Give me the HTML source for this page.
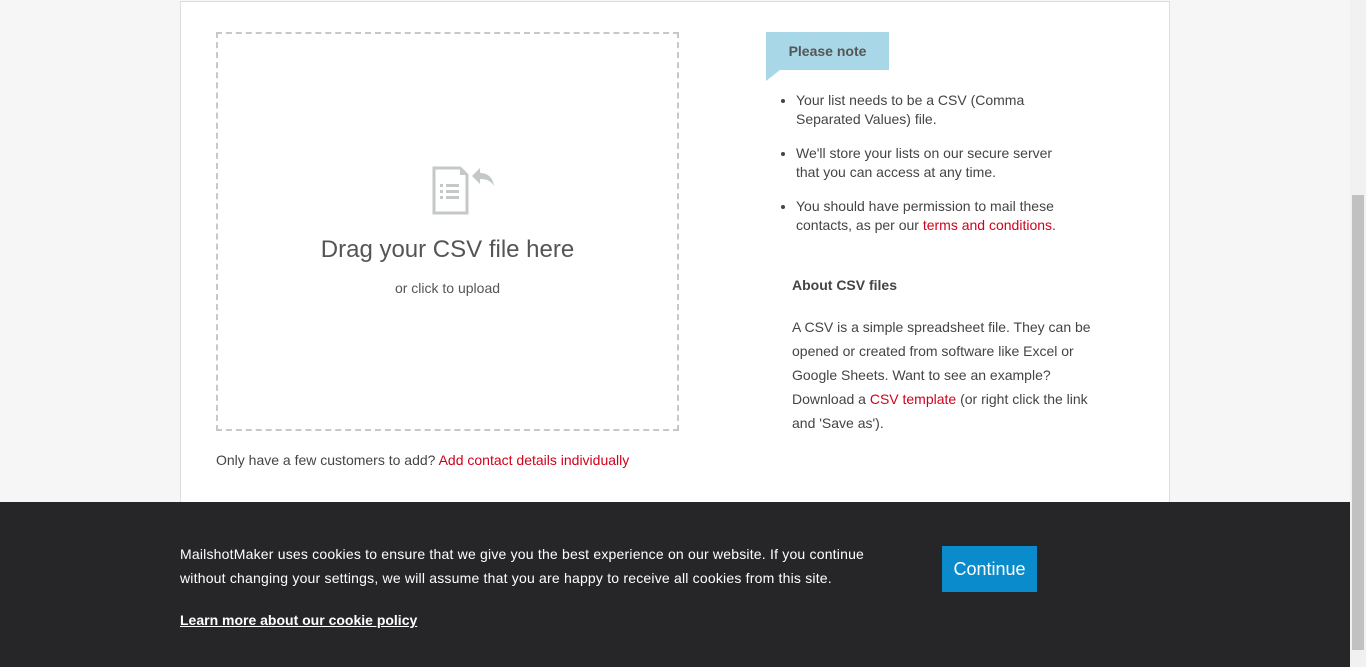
<!DOCTYPE html><html><head><style>
body{margin:0;width:1366px;height:667px;overflow:hidden;background:#f6f6f6;font-family:"Liberation Sans",sans-serif;position:relative;color:#444}
.box{position:absolute;left:180px;top:1px;width:988px;height:520px;background:#fff;border:1px solid #ddd}
.drop{position:absolute;left:216px;top:32px;width:459px;height:395px;border:2px dashed #c8c8c8}
a{color:#d0021b;text-decoration:none}
.note{position:absolute;left:766px;top:32px;width:123px;height:38px;background:#a8d8e8;color:#555;font-weight:bold;font-size:14px;line-height:38px;text-align:center}
ul{position:absolute;left:776px;top:91px;margin:0;padding:0 0 0 20px;width:278px;font-size:14px;line-height:19px;color:#444}
li{margin-bottom:15px}
.about{position:absolute;left:792px;top:273px;width:320px;font-size:14px;line-height:24px;color:#444}
.cookie{position:absolute;left:0;top:502px;width:1350px;height:165px;background:#262629;color:#fff;font-size:14px}
.sb{position:absolute;right:0;top:0;width:16px;height:667px;background:#f1f1f1}
.sb div{position:absolute;left:2px;right:2px;top:195px;height:455px;background:#c1c1c1}
</style></head><body>
<div class="box"></div>
<div class="drop">
<svg style="position:absolute;left:214px;top:132px" width="66" height="50" viewBox="0 0 66 50"><path d="M2 2H28L35 9V47H2Z" fill="none" stroke="#c4c8c8" stroke-width="3"/><path d="M28 2V9H35" fill="#c4c8c8"/><rect x="8" y="18" width="3" height="3" fill="#c4c8c8"/><rect x="8" y="24" width="3" height="3" fill="#c4c8c8"/><rect x="8" y="30" width="3" height="3" fill="#c4c8c8"/><rect x="14" y="18" width="13" height="3" fill="#c4c8c8"/><rect x="14" y="24" width="13" height="3" fill="#c4c8c8"/><rect x="14" y="30" width="13" height="3" fill="#c4c8c8"/><path d="M40 10L48 2V7C56 7 61 12 62 20C59 15 55 13 48 13V18Z" fill="#c4c8c8"/></svg>
<div style="position:absolute;top:202px;width:100%;text-align:center;font-size:24px;color:#555">Drag your CSV file here</div>
<div style="position:absolute;top:246px;width:100%;text-align:center;font-size:14px;color:#555">or click to upload</div>
</div>
<div style="position:absolute;left:216px;top:452px;font-size:14px;color:#444">Only have a few customers to add? <a>Add contact details individually</a></div>
<div class="note">Please note</div>
<svg style="position:absolute;left:766px;top:70px" width="14" height="11"><path d="M0 0H14L0 11Z" fill="#a8d8e8"/></svg>
<ul><li>Your list needs to be a CSV (Comma Separated Values) file.</li><li>We'll store your lists on our secure server that you can access at any time.</li><li>You should have permission to mail these contacts, as per our <a>terms and conditions</a>.</li></ul>
<div class="about"><b>About CSV files</b><div style="margin-top:18px">A CSV is a simple spreadsheet file. They can be opened or created from software like Excel or Google Sheets. Want to see an example? Download a <a>CSV template</a> (or right click the link and 'Save as').</div></div>
<div class="cookie">
<div style="position:absolute;left:180px;top:40px;width:720px;line-height:24px;letter-spacing:0.2px">MailshotMaker uses cookies to ensure that we give you the best experience on our website. If you continue<br>without changing your settings, we will assume that you are happy to receive all cookies from this site.</div>
<div style="position:absolute;left:180px;top:110px;text-decoration:underline;font-weight:bold">Learn more about our cookie policy</div>
<div style="position:absolute;left:942px;top:44px;width:95px;height:46px;background:#0a8ccc;font-size:18px;line-height:46px;text-align:center">Continue</div>
</div>
<div class="sb"><div></div></div>
</body></html>
